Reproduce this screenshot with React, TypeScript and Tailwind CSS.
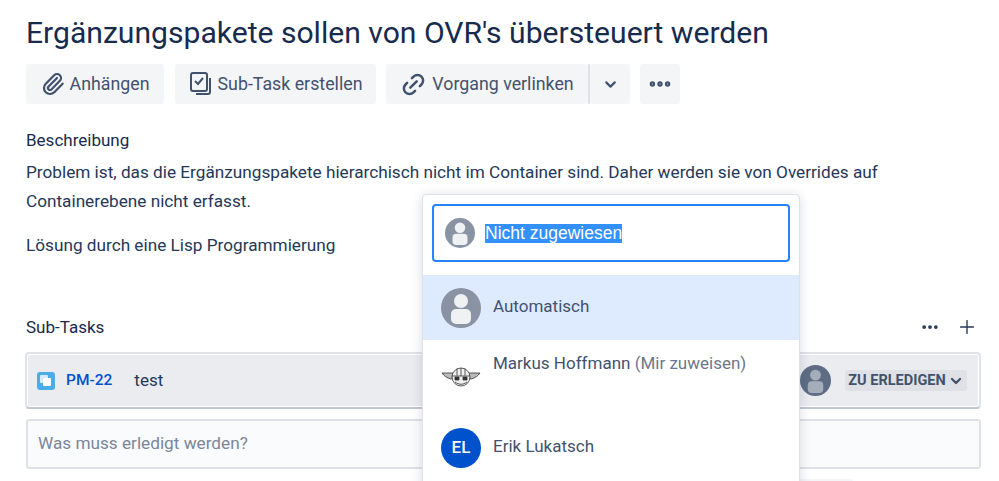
import { ChevronDown, Link2, MoreHorizontal, Paperclip, Plus } from 'lucide-react';
import type { ReactNode } from 'react';

function ToolButton({ icon, label, className }: { icon: ReactNode; label: string; className: string }) {
  return (
    <button className={`flex h-10 items-center gap-[5px] rounded-[3px] bg-[#f4f5f7] text-[17.8px] text-[#42526e] ${className}`}>
      {icon}
      <span>{label}</span>
    </button>
  );
}

function SubTaskIcon() {
  return (
    <svg width="24" height="26" viewBox="0 0 24 26" fill="none" stroke="#42526e" strokeWidth="2">
      <rect x="2" y="2" width="16" height="18" rx="2" />
      <path d="M6 10l3 3 5-6" />
      <path d="M21 7v14a2 2 0 0 1-2 2H7" />
    </svg>
  );
}

function UserAvatar({ size, bg, fg }: { size: number; bg: string; fg: string }) {
  return (
    <svg width={size} height={size} viewBox="0 0 40 40" className="shrink-0">
      <circle cx="20" cy="20" r="20" fill={bg} />
      <circle cx="20" cy="13" r="7" fill={fg} />
      <rect x="10" y="21" width="20" height="15" rx="5" fill={fg} />
    </svg>
  );
}

function WingsLogo() {
  return (
    <svg width="40" height="22" viewBox="0 0 40 22" className="shrink-0" fill="none" stroke="#333" strokeWidth="0.8">
      <path d="M1 6h11l1 5-3 1C6 11 3 9 1 6z" fill="#bbb" />
      <path d="M39 6H28l-1 5 3 1c4-1 7-3 9-6z" fill="#bbb" />
      <circle cx="20" cy="10" r="9" fill="#eee" />
      <path d="M11 9h18M20 1v8M14 15c4 3 8 3 12 0M16 1.5v7M24 1.5v7" />
      <path d="M14 10h4v3h-4zM22 10h4v3h-4z" fill="#333" />
    </svg>
  );
}

function AssigneeOption({ icon, className, children }: { icon: ReactNode; className: string; children: ReactNode }) {
  return (
    <div className={`flex gap-3 pl-[18px] text-[17px] text-[#42526e] ${className}`}>
      {icon}
      {children}
    </div>
  );
}

function AssigneePopup() {
  return (
    <div className="absolute left-[422px] top-[194px] h-[400px] w-[378px] rounded-[4px] border border-[#dfe1e6] bg-white shadow-[0_2px_12px_rgba(9,30,66,0.16)]">
      <div className="px-[9px] pt-[9px]">
        <div className="flex h-[58px] items-center gap-[10px] rounded-[4px] border-2 border-[#2684ff] pl-[11px]">
          <UserAvatar size={30} bg="#8993a4" fg="#f0f1f3" />
          <span className="bg-[#3390ff] font-['Liberation_Sans',sans-serif] text-[17.5px] leading-[19px] text-white">Nicht zugewiesen</span>
        </div>
      </div>
      <AssigneeOption className="mt-[13px] h-[65px] items-center bg-[#deebff]" icon={<UserAvatar size={40} bg="#8993a4" fg="#f0f1f3" />}>
        <span className="-mt-[2px]">Automatisch</span>
      </AssigneeOption>
      <AssigneeOption className="h-[76px] items-center" icon={<WingsLogo />}>
        <span className="-mt-[29px]">
          Markus Hoffmann <span className="text-[#6b778c]">(Mir zuweisen)</span>
        </span>
      </AssigneeOption>
      <AssigneeOption
        className="h-[64px] items-center"
        icon={
          <div className="flex size-10 shrink-0 items-center justify-center rounded-full bg-[#0052cc] text-[17px] font-medium text-white">
            EL
          </div>
        }
      >
        <span className="-mt-[2px]">Erik Lukatsch</span>
      </AssigneeOption>
    </div>
  );
}

export default function App() {
  return (
    <div className="relative h-[481px] w-[999px] overflow-hidden bg-white pl-[26px] pr-[18px] font-['Roboto',sans-serif] text-[#172b4d]">
      <h1 className="pt-[13px] text-[30.1px] leading-[40px] font-normal text-[#172b4d]">Ergänzungspakete sollen von OVR's übersteuert werden</h1>

      <div className="mt-[11px] flex">
        <ToolButton className="w-[138px] justify-center" icon={<Paperclip size={24} strokeWidth={2.2} />} label="Anhängen" />
        <ToolButton className="ml-[11px] w-[201px] justify-center" icon={<SubTaskIcon />} label="Sub-Task erstellen" />
        <ToolButton className="ml-[10px] w-[202px] justify-center" icon={<Link2 size={27} strokeWidth={2.2} className="-rotate-45" />} label="Vorgang verlinken" />
        <div className="h-10 w-[2px] bg-[#dfe1e6]" />
        <button className="flex h-10 w-10 items-center justify-center rounded-[3px] bg-[#f4f5f7] text-[#42526e]">
          <ChevronDown size={17} strokeWidth={3} />
        </button>
        <button className="ml-[10px] flex h-10 w-10 items-center justify-center rounded-[3px] bg-[#f4f5f7] text-[#42526e]">
          <MoreHorizontal size={26} strokeWidth={3} />
        </button>
      </div>

      <h2 className="mt-[24px] text-[17px] leading-[24px] font-normal">Beschreibung</h2>
      <p className="mt-[6px] text-[17.2px] leading-[29px] text-[#253858]">
        Problem ist, das die Ergänzungspakete hierarchisch nicht im Container sind. Daher werden sie von Overrides auf
        <br />
        Containerebene nicht erfasst.
      </p>
      <p className="mt-[15px] text-[17.2px] leading-[29px] text-[#253858]">Lösung durch eine Lisp Programmierung</p>

      <div className="mt-[55px] flex items-center justify-between">
        <h2 className="text-[17px] leading-[24px] font-normal">Sub-Tasks</h2>
        <div className="flex items-center gap-[16px] pr-[3px] text-[#253858]">
          <MoreHorizontal size={20} strokeWidth={2.5} />
          <Plus size={22} strokeWidth={1.5} />
        </div>
      </div>

      <div className="mt-[13px] -ml-px flex h-[57px] w-[956px] items-center rounded-[4px] border-2 border-[#e1e3e8] border-b-[#c1c7d0] bg-[#ebecf0] pl-[10px] pr-[12px] shadow-[inset_0_0_0_1px_#ffffff]">
        <div className="relative size-[18px] rounded-[3px] bg-[#4bade8]">
          <div className="absolute left-[3px] top-[3px] size-[8px] rounded-[1px] bg-[#d6ecfa]" />
          <div className="absolute left-[6px] top-[6px] size-[8px] rounded-[1px] bg-white" />
        </div>
        <a className="ml-[11px] text-[15.5px] font-medium text-[#0052cc]">PM-22</a>
        <span className="ml-[22px] text-[17px] text-[#253858]">test</span>
        <div className="ml-auto flex items-center gap-[14px]">
          <UserAvatar size={31} bg="#5e6c84" fg="#a5adba" />
          <button className="flex h-[21px] w-[122px] items-center justify-center gap-[2px] rounded-[3px] bg-[#dfe1e6] text-[14.5px] font-bold text-[#42526e]">
            ZU ERLEDIGEN
            <ChevronDown size={16} strokeWidth={3.5} />
          </button>
        </div>
      </div>

      <div className="mt-[10px] flex h-[50px] w-[955px] items-center rounded-[3px] border-2 border-[#dfe1e6] bg-[#fafbfc] pl-[10px] text-[17.2px] text-[#7a869a]">
        Was muss erledigt werden?
      </div>

      <div className="mt-[10px] ml-[500px] h-[30px] w-[327px] rounded-[3px] bg-[#f4f5f7]" />

      <AssigneePopup />
    </div>
  );
}
